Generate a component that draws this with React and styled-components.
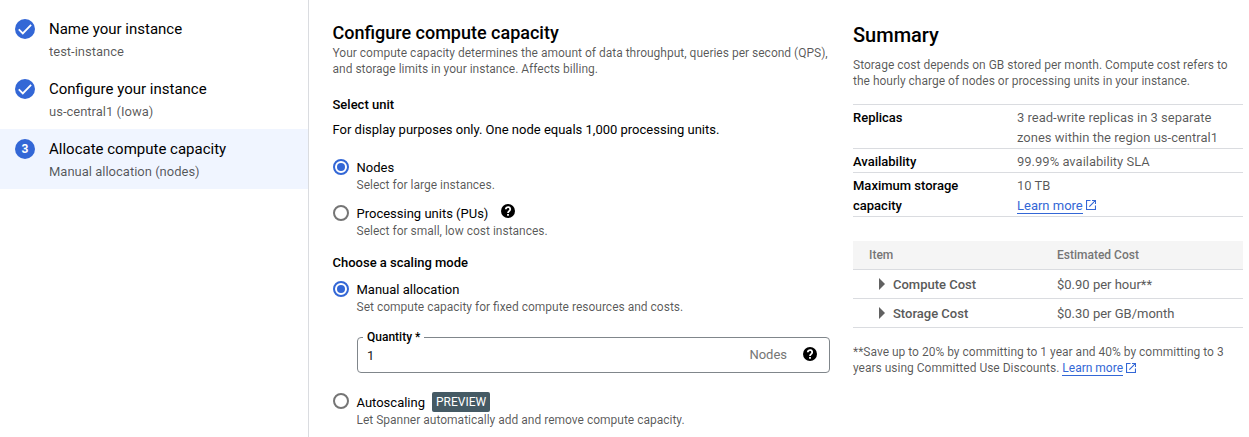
import React from "react";
import styled, { createGlobalStyle } from "styled-components";

const GlobalStyle = createGlobalStyle`
  * { box-sizing: border-box; }
  body {
    margin: 0;
    background: #fff;
    color: #000;
    font-family: Roboto, "Liberation Sans", sans-serif;
    overflow: hidden;
  }
`;

const Page = styled.div`
  display: flex;
  width: 1249px;
  height: 437px;
  overflow: hidden;
`;

const Sidebar = styled.nav`
  width: 309px;
  flex: none;
  padding-top: 9px;
  border-right: 1px solid #dadce0;
`;

const Step = styled.div`
  display: flex;
  height: 60px;
  padding: 10px 15px 0;
  gap: 14px;
  background: ${(p) => (p.$active ? "#f0f5ff" : "transparent")};
`;

const StepBadge = styled.span`
  display: flex;
  align-items: center;
  justify-content: center;
  width: 20px;
  height: 20px;
  border-radius: 50%;
  background: #3367d6;
  color: #fff;
  font-size: 12px;
  font-weight: 700;
`;

const StepTitle = styled.div`
  font-size: 15px;
  line-height: 20px;
`;

const StepSub = styled.div`
  padding-top: 3px;
  font-size: 13px;
  line-height: 20px;
  color: rgba(0, 0, 0, 0.66);
`;

const Main = styled.main`
  width: 497.5px;
  flex: none;
  margin-left: 23.5px;
  padding-top: 21px;
`;

const Heading = styled.h1`
  margin: 0;
  font-size: 18px;
  line-height: 24px;
  font-weight: 500;
`;

const Caption = styled.p`
  margin: 0;
  font-size: 12px;
  line-height: 16px;
  color: rgba(0, 0, 0, 0.66);
`;

const Label = styled.h2`
  margin: ${(p) => p.$top}px 0 0;
  font-size: 13px;
  line-height: 20px;
  font-weight: 500;
`;

const Note = styled.p`
  margin: 5px 0 0;
  font-size: 13px;
  line-height: 20px;
`;

const Option = styled.div`
  display: flex;
  gap: 8px;
  margin-top: ${(p) => p.$top}px;
`;

const Radio = styled.span`
  display: flex;
  align-items: center;
  justify-content: center;
  flex: none;
  width: 16px;
  height: 16px;
  margin-top: ${(p) => p.$top ?? 2}px;
  border: 2px solid ${(p) => (p.$checked ? "#3367d6" : "#757575")};
  border-radius: 50%;

  &::after {
    content: "";
    width: 8px;
    height: 8px;
    border-radius: 50%;
    background: ${(p) => (p.$checked ? "#3367d6" : "transparent")};
  }
`;

const OptionTitle = styled.div`
  display: flex;
  align-items: center;
  height: 20px;
  padding-top: 2px;
  gap: ${(p) => p.$gap ?? 0}px;
  font-size: 13px;
  line-height: 20px;
`;

const HelpSlot = styled.span`
  display: flex;
  padding-bottom: 6px;
`;

const Preview = styled.span`
  height: 20px;
  margin-bottom: 2px;
  padding: 0 4px;
  border-radius: 2px;
  background: #455a64;
  color: #fff;
  font-size: 12px;
  line-height: 20px;
`;

const Field = styled.fieldset`
  height: 43px;
  margin: 15px 0 0 24.5px;
  padding: 0 12px 0 9px;
  border: 1px solid #80868b;
  border-radius: 4px;
  min-width: 0;
`;

const FieldLegend = styled.legend`
  margin-left: -4px;
  padding: 0 4px;
  font-size: 12px;
  line-height: 14px;
  font-weight: 500;
`;

const FieldRow = styled.div`
  display: flex;
  align-items: center;
  height: 28px;
  margin-top: -4px;
  font-size: 13px;
  line-height: 20px;
`;

const FieldValue = styled.span`
  flex: 1;
  padding-top: 3px;
  color: #202124;
`;

const FieldUnit = styled.span`
  margin-right: 16px;
  padding-top: 1px;
  color: #757575;
`;

const Summary = styled.aside`
  width: 390px;
  flex: none;
  margin-left: 23px;
  padding-top: 21px;
`;

const SummaryTitle = styled.h1`
  margin: 0 0 8px;
  font-size: 20px;
  line-height: 28px;
  font-weight: 500;
`;

const Facts = styled.dl`
  margin: 15px 0 24px;
  border-bottom: 1px solid #dadce0;
`;

const Fact = styled.div`
  display: grid;
  grid-template-columns: 124px 210px;
  column-gap: 40px;
  padding-top: 3px;
  border-top: 1px solid #dadce0;
  font-size: 13px;
  line-height: 20px;
`;

const Term = styled.dt`
  font-weight: 500;
`;

const Detail = styled.dd`
  margin: 0;
  color: rgba(0, 0, 0, 0.66);
`;

const CostRow = styled.div`
  display: grid;
  grid-template-columns: 188px 1fr;
  align-items: center;
  height: 29px;
  padding-left: 16px;
  border-bottom: 1px solid #dadce0;
  background: ${(p) => (p.$head ? "#f5f5f5" : "transparent")};
  color: ${(p) => (p.$head ? "#757575" : "#5a5a5a")};
  font-size: ${(p) => (p.$head ? 12 : 13)}px;
  font-weight: ${(p) => (p.$head ? 500 : 400)};
`;

const CostName = styled.span`
  display: flex;
  align-items: center;
  gap: 8px;
  padding-left: 10px;
  font-weight: 500;
`;

const Footnote = styled.div`
  padding-top: 16px;
`;

const Link = styled.a`
  display: inline-block;
  height: ${(p) => p.$height}px;
  border-bottom: 1px solid #3367d6;
  color: #3367d6;
  vertical-align: top;
`;

const ExternalSvg = styled.svg`
  margin: ${(p) => p.$top}px 0 0 3px;
  vertical-align: top;
`;

const CheckIcon = () => (
  <svg width="20" height="20" viewBox="0 0 20 20" fill="none">
    <path d="M3.8 10.4l4 4 8.3-8.6" stroke="#fff" strokeWidth="1.8" />
  </svg>
);

const HelpIcon = () => (
  <svg width="14" height="14" viewBox="0 0 14 14" fill="none">
    <circle cx="7" cy="7" r="7" fill="#000" />
    <path
      d="M4.8 5.2a2.2 2.1 0 1 1 3.8 1.4C7.8 7.4 7 7.7 7 9M7 10.1v1.7"
      stroke="#fff"
      strokeWidth="1.8"
    />
  </svg>
);

const ExternalIcon = ({ top }) => (
  <ExternalSvg $top={top} width="10" height="10" viewBox="0 0 10 10" fill="none" stroke="#3367d6">
    <path d="M4.5 .5h-4v9h9v-4M6 .5h3.5V4M9.3 .7L3.3 6.7" strokeWidth="1.15" />
  </ExternalSvg>
);

const ArrowIcon = () => (
  <svg width="6" height="12" viewBox="0 0 6 12">
    <path d="M0 0l6 6-6 6z" fill="#616161" />
  </svg>
);

const steps = [
  { title: "Name your instance", sub: "test-instance", done: true },
  { title: "Configure your instance", sub: "us-central1 (Iowa)", done: true },
  { title: "Allocate compute capacity", sub: "Manual allocation (nodes)" },
];

const costs = [
  ["Compute Cost", "$0.90 per hour**"],
  ["Storage Cost", "$0.30 per GB/month"],
];

export default function App() {
  return (
    <Page>
      <GlobalStyle />
      <Sidebar>
        {steps.map((s, i) => (
          <Step key={s.title} $active={!s.done}>
            <StepBadge>{s.done ? <CheckIcon /> : i + 1}</StepBadge>
            <div>
              <StepTitle>{s.title}</StepTitle>
              <StepSub>{s.sub}</StepSub>
            </div>
          </Step>
        ))}
      </Sidebar>

      <Main>
        <Heading>Configure compute capacity</Heading>
        <Caption>
          Your compute capacity determines the amount of data throughput, queries per second (QPS),
          <br />
          and storage limits in your instance. Affects billing.
        </Caption>

        <Label $top={18}>Select unit</Label>
        <Note>For display purposes only. One node equals 1,000 processing units.</Note>
        <Option $top={17}>
          <Radio $checked />
          <div>
            <OptionTitle>Nodes</OptionTitle>
            <Caption>Select for large instances.</Caption>
          </div>
        </Option>
        <Option $top={10}>
          <Radio />
          <div>
            <OptionTitle $gap={13}>
              Processing units (PUs)
              <HelpSlot>
                <HelpIcon />
              </HelpSlot>
            </OptionTitle>
            <Caption>Select for small, low cost instances.</Caption>
          </div>
        </Option>

        <Label $top={14}>Choose a scaling mode</Label>
        <Option $top={6}>
          <Radio $checked />
          <div>
            <OptionTitle>Manual allocation</OptionTitle>
            <Caption>Set compute capacity for fixed compute resources and costs.</Caption>
          </div>
        </Option>
        <Field>
          <FieldLegend>Quantity *</FieldLegend>
          <FieldRow>
            <FieldValue>1</FieldValue>
            <FieldUnit>Nodes</FieldUnit>
            <HelpIcon />
          </FieldRow>
        </Field>
        <Option $top={19}>
          <Radio $top={1} />
          <div>
            <OptionTitle $gap={7}>
              Autoscaling
              <Preview>PREVIEW</Preview>
            </OptionTitle>
            <Caption>Let Spanner automatically add and remove compute capacity.</Caption>
          </div>
        </Option>
      </Main>

      <Summary>
        <SummaryTitle>Summary</SummaryTitle>
        <Caption>
          Storage cost depends on GB stored per month. Compute cost refers to
          <br />
          the hourly charge of nodes or processing units in your instance.
        </Caption>
        <Facts>
          <Fact>
            <Term>Replicas</Term>
            <Detail>3 read-write replicas in 3 separate zones within the region us-central1</Detail>
          </Fact>
          <Fact>
            <Term>Availability</Term>
            <Detail>99.99% availability SLA</Detail>
          </Fact>
          <Fact>
            <Term>Maximum storage capacity</Term>
            <Detail>
              10 TB
              <br />
              <Link $height={18}>Learn more</Link>
              <ExternalIcon top={4} />
            </Detail>
          </Fact>
        </Facts>
        <CostRow $head>
          <span>Item</span>
          <span>Estimated Cost</span>
        </CostRow>
        {costs.map(([name, cost]) => (
          <CostRow key={name}>
            <CostName>
              <ArrowIcon />
              {name}
            </CostName>
            <span>{cost}</span>
          </CostRow>
        ))}
        <Footnote>
          <Caption>
            **Save up to 20% by committing to 1 year and 40% by committing to 3
            <br />
            years using Committed Use Discounts. <Link $height={16}>Learn more</Link>
            <ExternalIcon top={3} />
          </Caption>
        </Footnote>
      </Summary>
    </Page>
  );
}
